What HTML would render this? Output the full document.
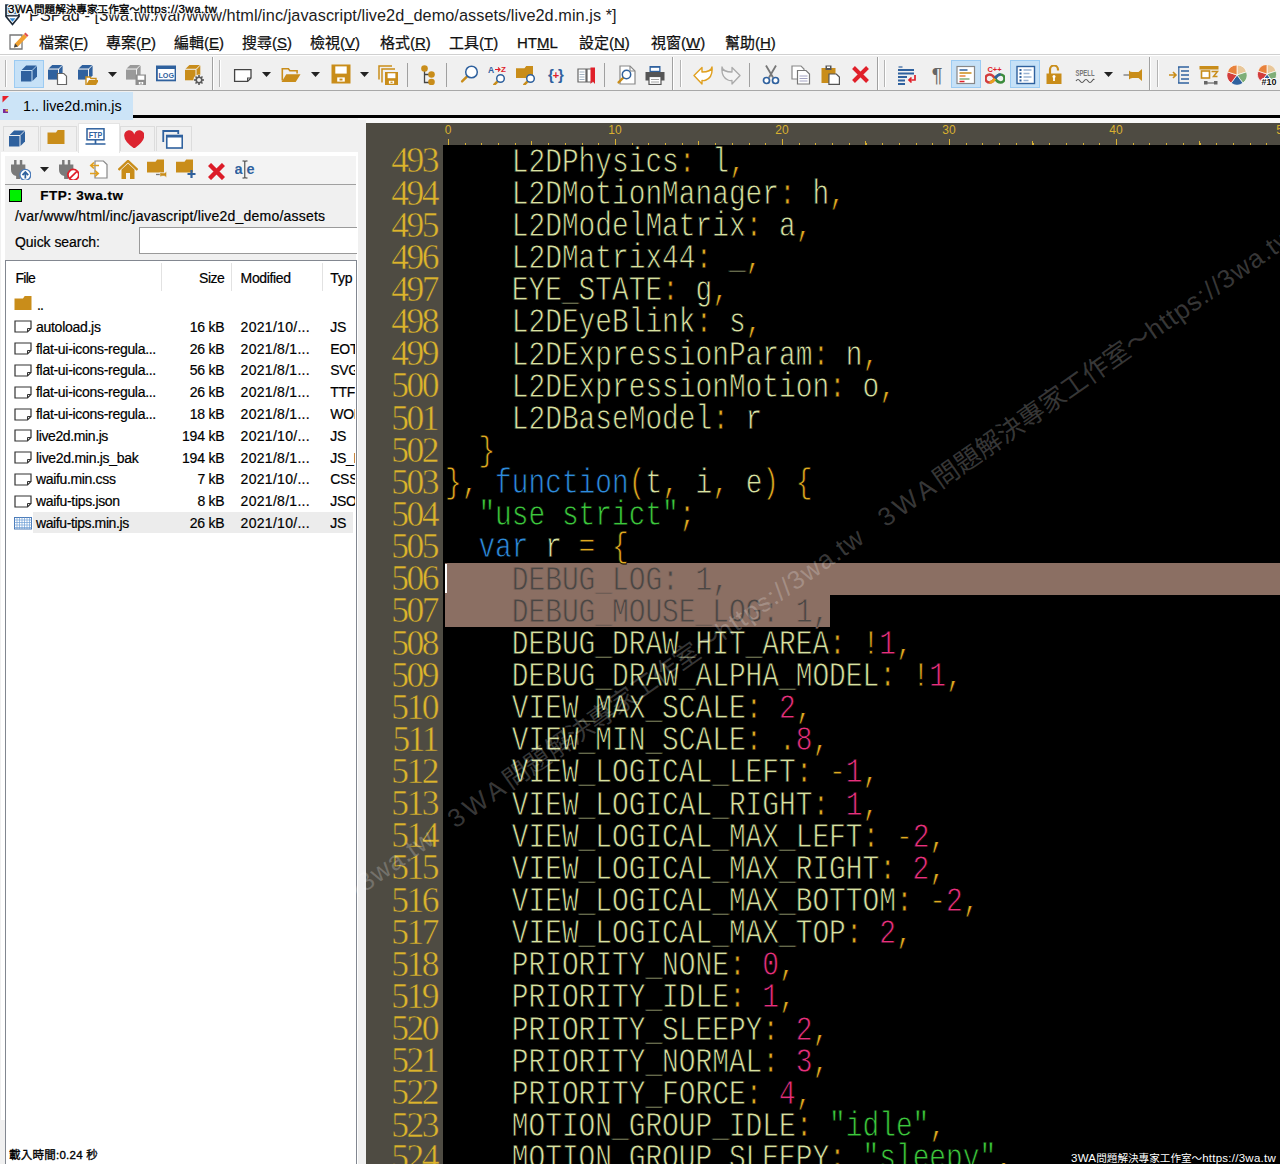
<!DOCTYPE html>
<html><head><meta charset="utf-8"><title>PSPad</title>
<style>
html,body{margin:0;padding:0}
body{width:1280px;height:1164px;position:relative;overflow:hidden;background:#f0f0f0;
 font-family:"Liberation Sans","Noto Sans CJK TC",sans-serif;color:#000;}
.abs{position:absolute}
#title{left:0;top:0;width:1280px;height:30px;background:#fff}
.wmk{font-size:11.500px;line-height:16px;white-space:nowrap;z-index:50;letter-spacing:0.25px}
.wmk .cj{font-size:10.600px;letter-spacing:0}
#wm1{left:8px;top:1px;letter-spacing:0.500px;color:#000;-webkit-text-stroke:0.35px #000;text-shadow:-1px 0 #fff,1px 0 #fff,0 -1px #fff,0 1px #fff,-1px -1px #fff,1px 1px #fff,1px -1px #fff,-1px 1px #fff}
#wm3{left:9px;top:1147px;color:#000;-webkit-text-stroke:0.35px #000;text-shadow:-1px 0 #fff,1px 0 #fff,0 -1px #fff,0 1px #fff,-1px -1px #fff,1px 1px #fff,1px -1px #fff,-1px 1px #fff}
#wm2{left:1071px;top:1149.500px;color:#fff}
#wmd{left:29px;top:1105px;height:30px;width:1600px;transform-origin:0 100%;transform:rotate(-35deg);white-space:nowrap;font-size:26px;line-height:30px;color:rgba(255,255,255,0.22);z-index:40}
#wmd>span{display:inline-block;width:525px}
#wmd s{text-decoration:none}#wmd b{font-weight:normal;letter-spacing:4px}#wmd i{font-style:normal;letter-spacing:1.1px}
#menu{left:0;top:30px;width:1280px;height:24px;background:#fff;border-bottom:1px solid #d0d0d0}
#menu span{-webkit-text-stroke:0.25px #111;position:absolute;top:2px;font-size:15px;line-height:22px;white-space:nowrap;color:#111}
#tb{left:0;top:55px;width:1280px;height:34px;background:#f0f0f0;border-top:1px solid #fff;border-bottom:1px solid #a8a8a8}
#tabs{left:0;top:92px;width:1280px;height:23px;background:#f0f0f0}
#tab1{left:0;top:92px;width:133px;height:28px;background:#cce4f7}
#tab1 .t{left:23px;top:5px;font-size:14.3px;line-height:18px;white-space:nowrap;color:#000}
#bline{left:133px;top:115.400px;width:1147px;height:2.800px;background:#000}
#strip{left:358px;top:118.200px;width:922px;height:5px;background:#f8f8f8}
#left{left:0;top:120px;width:366px;height:1044px;background:#f0f0f0}
.tx{white-space:nowrap;-webkit-text-stroke:0.2px currentColor}
.act{background:#c6e1f7;border:1px solid #9ccbf2}
.sep{top:63px;width:1px;height:24px;background:#a0a0a0}
.bsep{top:57px;width:1px;height:33px;background:#a0a0a0;box-shadow:1px 0 0 #fff}
.grip{top:60px;width:1px;height:27px;background:#b4b4b4;box-shadow:1px 0 0 #fff}
.ptab{background:#f0f0f0;border:1px solid #dcdcdc;border-bottom:none;box-sizing:border-box}
.ptab.on{background:#fff;border-color:#e4e4e4}
#pane{left:1px;top:151.500px;width:357px;height:1013px;background:#f0f0f0;border:solid #fff;border-width:4px 2px 0 4px;box-sizing:border-box}
#list{left:5px;top:260px;width:351.5px;height:910px;background:#fff;border:1px solid #828790;box-sizing:border-box}
#ed{left:366px;top:123px;width:914px;height:1041px;background:#4e4b42;overflow:hidden}
#code{left:77px;top:22px;width:837px;height:1019px;background:#000;overflow:hidden}
.cl,.ln{position:absolute;font-family:"Liberation Mono",monospace;font-size:35px;line-height:32.14px;height:32.14px;white-space:pre;transform-origin:0 0;transform:scaleX(0.7951)}
.cl{left:2.2px;color:#d8e2a0;margin-top:1.8px;-webkit-text-stroke:0.8px #000}
.cl.sl{color:#4a4644;-webkit-text-stroke:0.8px #8b6f63}
.ln{right:3px;transform:none;font-family:"Liberation Serif",serif;font-size:35.5px;letter-spacing:-2.5px;color:#dcb42c;margin-top:-0.6px;-webkit-text-stroke:0.5px #4e4b42}
#gut{left:0;top:22px;width:74px;height:1019px}
.k{color:#2e8bdc}.s{color:#3cc83c}.n{color:#e8307c}.p{color:#e0aa20}
.sel{background:#8b6f63}
.caret{width:2px;height:29px;background:#fff}
#ruler{left:0;top:0;width:914px;height:22px}
.rl{position:absolute;top:0px;width:40px;text-align:center;font-size:12px;line-height:14px;color:#d8b030}
.tk1{left:81.5px;top:20px;width:840px;height:2px;background:repeating-linear-gradient(90deg,#d8b030 0,#d8b030 1px,transparent 1px,transparent 16.7px)}
.tk5{left:81.5px;top:18px;width:840px;height:4px;background:repeating-linear-gradient(90deg,#d8b030 0,#d8b030 1px,transparent 1px,transparent 83.5px)}
.tk10{left:81.5px;top:16px;width:840px;height:6px;background:repeating-linear-gradient(90deg,#d8b030 0,#d8b030 1px,transparent 1px,transparent 167px)}
</style></head>
<body>
<div id="title" class="abs"></div><svg class="abs" style="left:5.0px;top:3.5px" width="15" height="22" viewBox="0 0 15 22"><path d="M1 1h13v11.500l-6.500 8l-6.500 -8z" fill="#fff" stroke="#1c2836" stroke-width="1.700"/><rect x="2.600" y="2.600" width="9.800" height="7.600" fill="#3c78b4"/><path d="M1 11.800h13" stroke="#1c2836" stroke-width="1.400"/><path d="M4.500 14.200h6l-3 3.600z" fill="#2f8ad8"/></svg><span class="abs tx" style="left:29.0px;top:4.5px;font-size:16.3px;line-height:21px;letter-spacing:0.05px;color:#1c1c1c;-webkit-text-stroke:0;">PSPad - [3wa.tw:/var/www/html/inc/javascript/live2d_demo/assets/live2d.min.js *]</span>
<div id="wm1" class="abs wmk">3WA<span class="cj">問題解決專家工作室～</span>https:<span>//</span>3wa.tw</div>
<div id="menu" class="abs"><span style="left:39px">檔案(<u>F</u>)</span><span style="left:106px">專案(<u>P</u>)</span><span style="left:174px">編輯(<u>E</u>)</span><span style="left:242px">搜尋(<u>S</u>)</span><span style="left:310px">檢視(<u>V</u>)</span><span style="left:380px">格式(<u>R</u>)</span><span style="left:449px">工具(<u>T</u>)</span><span style="left:517px">HT<u>M</u>L</span><span style="left:579px">設定(<u>N</u>)</span><span style="left:651px">視窗(<u>W</u>)</span><span style="left:725px">幫助(<u>H</u>)</span></div><svg class="abs" style="left:9.0px;top:32.0px" width="20" height="20" viewBox="0 0 20 20"><path d="M1 3h12v14h-12z" fill="#fff" stroke="#777" stroke-width="1.300"/><path d="M5 15.500l1 -4l9 -9.500l3 3l-9 9.500z" fill="#f0a030"/><path d="M15 2l3 3l1.500 -1.500l-3 -3z" fill="#e05050"/><path d="M5 15.500l1 -4l3 3z" fill="#444"/></svg>
<div id="tb" class="abs"></div><div class="abs grip" style="left:5.0px"></div><div class="abs act" style="left:14.3px;top:60px;width:27.5px;height:26px"></div><svg class="abs" style="left:19.5px;top:63.0px" width="20" height="20" viewBox="0 0 20 20"><path d="M1.0 8.0h10.5v10.5h-10.5z" fill="#2f619e"/><path d="M1.6 7.0l4.5 -4.5h10.5l-4.5 4.5z" fill="#2f619e"/><path d="M12.5 7.6l4.5 -4.5v10.5l-4.5 4.5z" fill="#2f619e"/></svg><svg class="abs" style="left:47.5px;top:64.5px" width="20" height="20" viewBox="0 0 20 20"><path d="M0.0 4.6h10.0v10.0h-10.0z" fill="#2f619e"/><path d="M0.6 3.6l3.6 -3.6h10.0l-3.6 3.6z" fill="#2f619e"/><path d="M11.0 4.2l3.6 -3.6v10.0l-3.6 3.6z" fill="#2f619e"/><path d="M9.5 8.5h6.3l2.7 2.7v8.3h-9.0z" fill="#fff" stroke="#666" stroke-width="1.2"/></svg><svg class="abs" style="left:78.0px;top:64.5px" width="20" height="20" viewBox="0 0 20 20"><path d="M0.0 4.6h10.0v10.0h-10.0z" fill="#2f619e"/><path d="M0.6 3.6l3.6 -3.6h10.0l-3.6 3.6z" fill="#2f619e"/><path d="M11.0 4.2l3.6 -3.6v10.0l-3.6 3.6z" fill="#2f619e"/><path d="M8 20v-8h4l1 1.5h5v2" fill="#fff" stroke="#c98d1a" stroke-width="1.4"/><path d="M8 20l3 -5h10l-3 5z" fill="#c98d1a"/></svg><svg class="abs" style="left:108.0px;top:72px" width="9" height="5" viewBox="0 0 9 5"><path d="M0 0h9l-4.500 5z" fill="#222"/></svg><svg class="abs" style="left:126.0px;top:64.5px" width="20" height="20" viewBox="0 0 20 20"><path d="M0.0 4.6h10.0v10.0h-10.0z" fill="#9a9a9a"/><path d="M0.6 3.6l3.6 -3.6h10.0l-3.6 3.6z" fill="#9a9a9a"/><path d="M11.0 4.2l3.6 -3.6v10.0l-3.6 3.6z" fill="#9a9a9a"/><path d="M9.5 9.5h11.0v11.0h-11.0z" fill="#8e8e8e"/><rect x="11.7" y="10.6" width="6.6" height="4.2" fill="#fff"/><rect x="12.8" y="17.0" width="4.4" height="2.4" fill="#fff"/><rect x="14.1" y="17.6" width="1.8" height="1.1" fill="#8e8e8e"/></svg><svg class="abs" style="left:155.5px;top:63.0px" width="20" height="20" viewBox="0 0 20 20"><rect x="0.9" y="3.4" width="18.6" height="14" fill="#fff" stroke="#2f619e" stroke-width="1.8"/><rect x="0.9" y="3" width="18.6" height="3" fill="#2f619e"/><text x="10.2" y="14.6" font-size="7.2" text-anchor="middle" fill="#2f619e" font-family="Liberation Sans,sans-serif" font-weight="bold">LOG</text></svg><svg class="abs" style="left:184.5px;top:64.5px" width="20" height="20" viewBox="0 0 20 20"><path d="M0.0 4.8h10.5v10.5h-10.5z" fill="#c98d1a"/><path d="M0.6 3.8l3.8 -3.8h10.5l-3.8 3.8z" fill="#c98d1a"/><path d="M11.5 4.4l3.8 -3.8v10.5l-3.8 3.8z" fill="#c98d1a"/><circle cx="14" cy="15" r="5.6" fill="#f0f0f0"/><path d="M16.5 15.0L19.0 15.0" stroke="#5a5a5a" stroke-width="1.6"/><path d="M15.8 16.8L17.5 18.5" stroke="#5a5a5a" stroke-width="1.6"/><path d="M14.0 17.5L14.0 20.0" stroke="#5a5a5a" stroke-width="1.6"/><path d="M12.2 16.8L10.5 18.5" stroke="#5a5a5a" stroke-width="1.6"/><path d="M11.5 15.0L9.0 15.0" stroke="#5a5a5a" stroke-width="1.6"/><path d="M12.2 13.2L10.5 11.5" stroke="#5a5a5a" stroke-width="1.6"/><path d="M14.0 12.5L14.0 10.0" stroke="#5a5a5a" stroke-width="1.6"/><path d="M15.8 13.2L17.5 11.5" stroke="#5a5a5a" stroke-width="1.6"/><circle cx="14.0" cy="15.0" r="2.8" fill="none" stroke="#5a5a5a" stroke-width="1.6"/></svg><div class="abs bsep" style="left:211.5px"></div><div class="abs grip" style="left:219.0px"></div><svg class="abs" style="left:233.0px;top:64.0px" width="20" height="20" viewBox="0 0 20 20"><path d="M1.6 5.6h16.4v8.4l-3.4 3.4h-13z" fill="#fff" stroke="#444" stroke-width="1.3"/><path d="M18 14h-3.4v3.4" fill="none" stroke="#444" stroke-width="1.1"/></svg><svg class="abs" style="left:262.0px;top:72px" width="9" height="5" viewBox="0 0 9 5"><path d="M0 0h9l-4.500 5z" fill="#222"/></svg><svg class="abs" style="left:281.0px;top:64.5px" width="20" height="20" viewBox="0 0 20 20"><path d="M1.3 15.6v-11.9h6.1l1.5 2.0h7.2v2.8" fill="none" stroke="#c98d1a" stroke-width="1.6"/><path d="M0.5 17.0l4.8 -7.7h14.2l-4.8 7.7z" fill="#c98d1a"/></svg><svg class="abs" style="left:311.0px;top:72px" width="9" height="5" viewBox="0 0 9 5"><path d="M0 0h9l-4.500 5z" fill="#222"/></svg><svg class="abs" style="left:331.0px;top:64.0px" width="20" height="20" viewBox="0 0 20 20"><path d="M0.5 0.5h19.0v19.0h-19.0z" fill="#c98d1a"/><rect x="4.3" y="2.4" width="11.4" height="7.2" fill="#fff"/><rect x="6.2" y="13.4" width="7.6" height="4.2" fill="#fff"/><rect x="8.5" y="14.6" width="3.0" height="1.9" fill="#c98d1a"/></svg><svg class="abs" style="left:360.0px;top:72px" width="9" height="5" viewBox="0 0 9 5"><path d="M0 0h9l-4.500 5z" fill="#222"/></svg><svg class="abs" style="left:377.5px;top:64.5px" width="20" height="20" viewBox="0 0 20 20"><path d="M1 14.500v-13.500h13" fill="none" stroke="#c98d1a" stroke-width="1.5"/><path d="M4 17.5v-13.500h13" fill="none" stroke="#c98d1a" stroke-width="1.5"/><path d="M7.0 7.0h13.0v13.0h-13.0z" fill="#c98d1a"/><rect x="9.6" y="8.3" width="7.8" height="4.9" fill="#fff"/><rect x="10.9" y="15.8" width="5.2" height="2.9" fill="#fff"/><rect x="12.5" y="16.6" width="2.1" height="1.3" fill="#c98d1a"/></svg><div class="abs sep" style="left:406.5px"></div><svg class="abs" style="left:420.0px;top:64.5px" width="20" height="20" viewBox="0 0 20 20"><path d="M4.500 4v13.500h5.500M4.500 9.500h5.500" fill="none" stroke="#444" stroke-width="1.3"/><circle cx="4.5" cy="3.5" r="3.3" fill="#c98d1a"/><circle cx="11.5" cy="9.5" r="3.300" fill="#c98d1a"/><circle cx="11.5" cy="17" r="3.300" fill="#c98d1a"/></svg><div class="abs sep" style="left:445.5px"></div><svg class="abs" style="left:459.0px;top:64.5px" width="20" height="20" viewBox="0 0 20 20"><path d="M8.4 11.1l-5.3 5.3" stroke="#c98d1a" stroke-width="2.4" stroke-linecap="round"/><circle cx="12.5" cy="7.0" r="5.8" fill="#fff" stroke="#2f619e" stroke-width="1.5"/></svg><svg class="abs" style="left:487.5px;top:64.5px" width="20" height="20" viewBox="0 0 20 20"><text x="0" y="8" font-size="8.500" fill="#2f619e" font-family="Liberation Sans,sans-serif" font-weight="bold">A</text><text x="13" y="7" font-size="8" fill="#e0202a" font-family="Liberation Sans,sans-serif" font-weight="bold">Z</text><path d="M7 4.500h5m-2 -2l2 2l-2 2" stroke="#e0202a" stroke-width="1.1" fill="none"/><path d="M9.8 16.2l-3.5 3.5" stroke="#c98d1a" stroke-width="2.4" stroke-linecap="round"/><circle cx="12.5" cy="13.5" r="3.8" fill="#fff" stroke="#2f619e" stroke-width="1.5"/></svg><svg class="abs" style="left:516.0px;top:64.5px" width="20" height="20" viewBox="0 0 20 20"><path d="M0.0 3.2h8.5l1.7 -2.2h6.8v12.0h-17.0z" fill="#c98d1a"/><path d="M11.8 16.2l-3.5 3.5" stroke="#c98d1a" stroke-width="2.4" stroke-linecap="round"/><circle cx="14.5" cy="13.5" r="3.8" fill="#fff" stroke="#2f619e" stroke-width="1.5"/></svg><svg class="abs" style="left:546.0px;top:64.5px" width="20" height="20" viewBox="0 0 20 20"><text x="10" y="15" font-size="15" text-anchor="middle" fill="#2f619e" font-family="Liberation Sans,sans-serif" font-weight="bold">{ }</text><text x="10" y="14" font-size="11" text-anchor="middle" fill="#e0202a" font-family="Liberation Sans,sans-serif" font-weight="bold">+</text></svg><svg class="abs" style="left:577.0px;top:64.5px" width="20" height="20" viewBox="0 0 20 20"><path d="M1 4h8v13h-8zM10 4h5v13h-5z" fill="#fff" stroke="#666" stroke-width="1.2"/><path d="M2.500 7h5M2.500 9.500h5M2.500 12h5M2.500 14.500h5" stroke="#9ab" stroke-width="0.9"/><path d="M13.500 2.500h4.500v16.500l-2.250 -2.500l-2.250 2.500z" fill="#e0202a"/></svg><div class="abs sep" style="left:604.0px"></div><svg class="abs" style="left:615.5px;top:64.5px" width="20" height="20" viewBox="0 0 20 20"><path d="M4 1h10l5 5v13h-15z" fill="#fff" stroke="#888" stroke-width="1.2"/><path d="M14 1v5h5" fill="none" stroke="#888" stroke-width="1.100"/><path d="M7.5 12.5l-4.9 4.9" stroke="#c98d1a" stroke-width="2.4" stroke-linecap="round"/><circle cx="10.5" cy="9.5" r="4.2" fill="#fff" stroke="#2f619e" stroke-width="1.5"/></svg><svg class="abs" style="left:645.0px;top:64.5px" width="20" height="20" viewBox="0 0 20 20"><rect x="4.500" y="1" width="11" height="6" fill="#2f619e"/><rect x="5.800" y="2.800" width="8.4" height="3" fill="#fff"/><path d="M0.500 7h19v8.500h-19z" fill="#555"/><rect x="4" y="11.500" width="12" height="8" fill="#fff" stroke="#555" stroke-width="1.200"/><path d="M6 14.500h8M6 17h8" stroke="#999" stroke-width="0.900"/></svg><div class="abs bsep" style="left:672.0px"></div><div class="abs grip" style="left:679.5px"></div><svg class="abs" style="left:692.5px;top:64.5px" width="20" height="20" viewBox="0 0 20 20"><path d="M1 10.500l8 -8v4.500q9 0 10 -5q1 10 -6 13q-2 1 -4 0.500v3.500z" fill="#fff" stroke="#e0a020" stroke-width="1.4" stroke-linejoin="round"/></svg><svg class="abs" style="left:720.5px;top:64.5px" width="20" height="20" viewBox="0 0 20 20"><path d="M19 10.500l-8 -8v4.500q-9 0 -10 -5q-1 10 6 13q2 1 4 0.500v3.500z" fill="#f4f4f4" stroke="#aaa" stroke-width="1.300" stroke-linejoin="round"/></svg><div class="abs sep" style="left:749.0px"></div><svg class="abs" style="left:761.0px;top:64.5px" width="20" height="20" viewBox="0 0 20 20"><path d="M5 0.500l7 12M15 0.500l-7 12" stroke="#777" stroke-width="1.800" fill="none"/><circle cx="5.500" cy="15.500" r="3" fill="#fff" stroke="#2f619e" stroke-width="1.700"/><circle cx="14.500" cy="15.500" r="3" fill="#fff" stroke="#2f619e" stroke-width="1.700"/></svg><svg class="abs" style="left:791.0px;top:64.5px" width="20" height="20" viewBox="0 0 20 20"><path d="M1 1h9l3 3v10h-12z" fill="#fff" stroke="#888" stroke-width="1.200"/><path d="M6.500 5.500h8.500l3.500 3.500v10h-12z" fill="#fff" stroke="#777" stroke-width="1.200"/><path d="M8.500 11h8M8.500 13.500h8M8.500 16h8" stroke="#99b" stroke-width="0.900"/></svg><svg class="abs" style="left:820.5px;top:64.5px" width="20" height="20" viewBox="0 0 20 20"><path d="M0.500 3h14v15h-14z" fill="#c98d1a"/><rect x="4.500" y="0.500" width="6" height="4.500" fill="#555"/><rect x="6" y="1.500" width="3" height="1.500" fill="#fff"/><path d="M8.0 9.0h7.3l3.1 3.1v7.3h-10.5z" fill="#fff" stroke="#555" stroke-width="1.2"/></svg><svg class="abs" style="left:851.0px;top:64.5px" width="20" height="20" viewBox="0 0 20 20"><path d="M2.5 2.5l14.0 14.0M16.5 2.5l-14.0 14.0" stroke="#e0202a" stroke-width="4.0" fill="none"/></svg><div class="abs bsep" style="left:876.5px"></div><div class="abs grip" style="left:884.0px"></div><svg class="abs" style="left:897.0px;top:64.5px" width="20" height="20" viewBox="0 0 20 20"><path d="M1.500 2h4" stroke="#2f619e" stroke-width="1.200"/><path d="M1 5h16M1 8.500h16M1 12h9M1 15.500h7M1 19h7" stroke="#2f619e" stroke-width="1.900"/><path d="M18 10v5h-6m2.500 -2.500l-2.500 2.500l2.500 2.500" stroke="#e0202a" stroke-width="1.700" fill="none"/></svg><svg class="abs" style="left:931.0px;top:64.5px" width="20" height="20" viewBox="0 0 20 20"><text x="6" y="17" font-size="20" text-anchor="middle" fill="#666" font-family="Liberation Sans,sans-serif">¶</text></svg><div class="abs act" style="left:951.0px;top:60px;width:28.0px;height:26px"></div><svg class="abs" style="left:956.0px;top:64.5px" width="20" height="20" viewBox="0 0 20 20"><rect x="1" y="1.500" width="17.500" height="17" fill="#fff" stroke="#888" stroke-width="1.200"/><path d="M3.500 5h8" stroke="#2f619e" stroke-width="1.500"/><path d="M3.500 8h12" stroke="#c98d1a" stroke-width="1.500"/><path d="M3.500 11h6" stroke="#e8823c" stroke-width="1.500"/><path d="M3.500 14h10" stroke="#7fae78" stroke-width="1.500"/><path d="M3.500 16.500h5" stroke="#e0202a" stroke-width="1.500"/></svg><svg class="abs" style="left:985.0px;top:64.5px" width="20" height="20" viewBox="0 0 20 20"><text x="9.500" y="6.500" font-size="7.500" text-anchor="middle" fill="#e0202a" font-family="Liberation Sans,sans-serif" font-weight="bold">C++</text><path d="M10 13.500q-2.500 -4 -5.500 -4a4 4 0 0 0 0 8q3 0 5.500 -4" fill="none" stroke="#d23c3c" stroke-width="2.600"/><path d="M10 13.500q2.500 4 5.500 4a4 4 0 0 0 0 -8q-3 0 -5.500 4" fill="none" stroke="#3c8c3c" stroke-width="2.600"/><path d="M4.500 17.500q3 0 5.500 -4" fill="none" stroke="#e8a020" stroke-width="2.600"/><path d="M15.500 9.500q-3 0 -5.500 4" fill="none" stroke="#2f619e" stroke-width="2.600"/></svg><div class="abs act" style="left:1010.0px;top:60px;width:28.0px;height:26px"></div><svg class="abs" style="left:1016.0px;top:64.5px" width="20" height="20" viewBox="0 0 20 20"><rect x="1" y="1.500" width="17.500" height="17" fill="#fff" stroke="#2f619e" stroke-width="1.400"/><path d="M3.500 5h2M3.500 8.500h2M3.500 12h2M3.500 15.500h2" stroke="#2f619e" stroke-width="1.800"/><path d="M7.500 5h8M7.500 8.500h6M7.500 12h8M7.500 15.500h5" stroke="#9ab4d4" stroke-width="1.300"/></svg><svg class="abs" style="left:1045.0px;top:64.5px" width="20" height="20" viewBox="0 0 20 20"><path d="M5 9v-4.500a4 4 0 0 1 8 0v1" fill="none" stroke="#c98d1a" stroke-width="2.200"/><rect x="1.500" y="8.500" width="15" height="10.500" fill="#c98d1a"/><path d="M9 11v5" stroke="#fff" stroke-width="1.800"/><circle cx="9" cy="11.500" r="1.500" fill="#fff"/></svg><svg class="abs" style="left:1075.0px;top:65.5px" width="20" height="20" viewBox="0 0 20 20"><text x="10" y="9.500" font-size="8.200" text-anchor="middle" fill="#777" font-family="Liberation Sans,sans-serif" font-weight="bold" textLength="19" lengthAdjust="spacingAndGlyphs">SPELL</text><path d="M1 15q2 -3 4 0t4 0t4 0t4 0t2 -1" fill="none" stroke="#555" stroke-width="1.100"/></svg><svg class="abs" style="left:1104.0px;top:72px" width="9" height="5" viewBox="0 0 9 5"><path d="M0 0h9l-4.500 5z" fill="#222"/></svg><svg class="abs" style="left:1123.0px;top:64.5px" width="20" height="20" viewBox="0 0 20 20"><path d="M0.500 10h7" stroke="#888" stroke-width="1.500"/><path d="M6 5.500q1.500 2 4.500 1.500h5l3.500 -3v12l-3.500 -3h-5q-3 -0.500 -4.500 1.500z" fill="#c98d1a"/></svg><div class="abs bsep" style="left:1148.5px"></div><div class="abs grip" style="left:1156.5px"></div><svg class="abs" style="left:1168.5px;top:64.5px" width="20" height="20" viewBox="0 0 20 20"><path d="M0 10h6.500m-2.500 -3l3 3l-3 3" stroke="#c98d1a" stroke-width="1.600" fill="none"/><path d="M9 2h11M12 6h8M12 10h8M12 14h8M9 18h11" stroke="#2f619e" stroke-width="1.600"/><path d="M9.800 2v16" stroke="#2f619e" stroke-width="1.200"/></svg><svg class="abs" style="left:1199.0px;top:64.5px" width="20" height="20" viewBox="0 0 20 20"><path d="M0.500 1h19v3.500h-19z" fill="#c98d1a"/><rect x="2.500" y="6" width="8" height="7" fill="#fff" stroke="#c98d1a" stroke-width="1.600"/><path d="M12.500 6.500h6l-4 5h4" fill="none" stroke="#c98d1a" stroke-width="1.500"/><path d="M7 18h9" stroke="#666" stroke-width="1.200"/><rect x="5" y="16" width="3.500" height="3.500" fill="#666"/><rect x="15" y="16" width="3.500" height="3.500" fill="#666"/></svg><svg class="abs" style="left:1227.0px;top:64.5px" width="20" height="20" viewBox="0 0 20 20"><path d="M10.0 10.0L10.0 0.0A10.0 10.0 0 0 1 19.5 6.9z" fill="#e8c79a" stroke="#fff" stroke-width="0.7"/><path d="M10.0 10.0L19.5 6.9A10.0 10.0 0 0 1 15.9 18.1z" fill="#7fae78" stroke="#fff" stroke-width="0.7"/><path d="M10.0 10.0L15.9 18.1A10.0 10.0 0 0 1 4.1 18.1z" fill="#2f619e" stroke="#fff" stroke-width="0.7"/><path d="M10.0 10.0L4.1 18.1A10.0 10.0 0 0 1 0.5 6.9z" fill="#d23c3c" stroke="#fff" stroke-width="0.7"/><path d="M10.0 10.0L0.5 6.9A10.0 10.0 0 0 1 10.0 0.0z" fill="#e8823c" stroke="#fff" stroke-width="0.7"/></svg><svg class="abs" style="left:1257.0px;top:64.5px" width="20" height="20" viewBox="0 0 20 20"><path d="M10.0 9.0L10.0 -0.5A9.5 9.5 0 0 1 19.0 6.1z" fill="#e8c79a" stroke="#fff" stroke-width="0.7"/><path d="M10.0 9.0L19.0 6.1A9.5 9.5 0 0 1 15.6 16.7z" fill="#7fae78" stroke="#fff" stroke-width="0.7"/><path d="M10.0 9.0L15.6 16.7A9.5 9.5 0 0 1 4.4 16.7z" fill="#2f619e" stroke="#fff" stroke-width="0.7"/><path d="M10.0 9.0L4.4 16.7A9.5 9.5 0 0 1 1.0 6.1z" fill="#d23c3c" stroke="#fff" stroke-width="0.7"/><path d="M10.0 9.0L1.0 6.1A9.5 9.5 0 0 1 10.0 -0.5z" fill="#e8823c" stroke="#fff" stroke-width="0.7"/><text x="12" y="20" font-size="9" text-anchor="middle" fill="#111" stroke="#fff" stroke-width="2" paint-order="stroke" font-family="Liberation Sans,sans-serif" font-weight="bold">#10</text></svg>
<div id="tabs" class="abs"></div><div id="tab1" class="abs"><div class="t abs">1.. live2d.min.js</div><svg class="abs" style="left:2px;top:4px" width="8" height="18" viewBox="0 0 8 18"><path d="M0.500 0h6.500l-6.500 6.500z" fill="#e8202a"/><path d="M1 13h5v4h-5z" fill="#7a2a9a"/><path d="M3.500 13.500h2.500v2h-2.500z" fill="#f0c040"/></svg></div><div id="bline" class="abs"></div><div id="strip" class="abs"></div>
<div id="left" class="abs"></div><div class="abs ptab" style="left:3.0px;top:126px;width:36.0px;height:25px"></div><div class="abs ptab" style="left:40.0px;top:126px;width:36.5px;height:25px"></div><div class="abs ptab" style="left:120.0px;top:126px;width:35.0px;height:25px"></div><div class="abs ptab" style="left:156.0px;top:126px;width:35.5px;height:25px"></div><div id="pane" class="abs"></div><div class="abs ptab on" style="left:77.5px;top:123px;width:42px;height:30px"></div><svg class="abs" style="left:8.0px;top:128.0px" width="20" height="20" viewBox="0 0 20 20"><path d="M1.0 8.0h10.5v10.5h-10.5z" fill="#2f619e"/><path d="M1.6 7.0l4.5 -4.5h10.5l-4.5 4.5z" fill="#2f619e"/><path d="M12.5 7.6l4.5 -4.5v10.5l-4.5 4.5z" fill="#2f619e"/></svg><svg class="abs" style="left:46.5px;top:128.0px" width="20" height="20" viewBox="0 0 20 20"><path d="M0.5 4.5h8.5l1.7 -2.5h6.8v14.0h-17.0z" fill="#c98d1a"/></svg><svg class="abs" style="left:85.0px;top:128.0px" width="21" height="17" viewBox="0 0 20 17"><rect x="1.500" y="0.800" width="17" height="11" fill="#fff" stroke="#2f619e" stroke-width="1.500"/><text x="10" y="9.600" font-size="9" text-anchor="middle" fill="#2f619e" font-family="Liberation Sans,sans-serif" font-weight="bold" textLength="13.500" lengthAdjust="spacingAndGlyphs">FTP</text><path d="M10 12v3.500M0 16h20" stroke="#2f619e" stroke-width="1.700"/></svg><svg class="abs" style="left:123.5px;top:129.5px" width="20.5" height="18.5" viewBox="0 0 20 18.5"><path d="M10 18.500q-10 -7 -10 -12.500a5 5 0 0 1 10 -1.500a5 5 0 0 1 10 1.500q0 5.500 -10 12.500z" fill="#dc2430"/></svg><svg class="abs" style="left:161.5px;top:130.0px" width="21.5" height="19" viewBox="0 0 21 19"><path d="M1 12v-11h15v3" fill="none" stroke="#2f619e" stroke-width="1.800"/><rect x="4.500" y="5.500" width="15.500" height="12.500" fill="#fff" stroke="#2f619e" stroke-width="1.600"/><rect x="4.500" y="5" width="15.500" height="2.500" fill="#2f619e"/></svg><div class="abs" style="left:5px;top:155.500px;width:351px;height:28px;background:#f3f3f3;border-bottom:1.500px solid #a0a0a0"></div><svg class="abs" style="left:10.5px;top:159.5px" width="20.5" height="20.5" viewBox="0 0 20 20"><rect x="3.0" y="0.0" width="2.4" height="5" fill="#7a7a7a"/><rect x="8.6" y="0.0" width="2.4" height="5" fill="#7a7a7a"/><path d="M0.0 4.5h14v5q0 5 -5 6v3h-4v-3q-5 -1 -5 -6z" fill="#7a7a7a"/><circle cx="14" cy="14.500" r="5.300" fill="#fff" stroke="#4a7ab8" stroke-width="1.300"/><path d="M14 18v-6m-2.800 2.800l2.800 -3l2.800 3" stroke="#2f619e" stroke-width="1.700" fill="none"/></svg><svg class="abs" style="left:39.5px;top:167px" width="9" height="5" viewBox="0 0 9 5"><path d="M0 0h9l-4.500 5z" fill="#222"/></svg><svg class="abs" style="left:58.5px;top:159.5px" width="20.5" height="20.5" viewBox="0 0 20 20"><rect x="3.0" y="0.0" width="2.4" height="5" fill="#7a7a7a"/><rect x="8.6" y="0.0" width="2.4" height="5" fill="#7a7a7a"/><path d="M0.0 4.5h14v5q0 5 -5 6v3h-4v-3q-5 -1 -5 -6z" fill="#7a7a7a"/><circle cx="14" cy="14.500" r="5.300" fill="#fff" stroke="#e0202a" stroke-width="1.700"/><path d="M10.500 18l7 -7" stroke="#e0202a" stroke-width="1.700"/></svg><svg class="abs" style="left:88.5px;top:159.5px" width="20" height="20" viewBox="0 0 20 20"><path d="M6.0 1.0h8.4l3.6 3.6v13.4h-12.0z" fill="#fff" stroke="#888" stroke-width="1.2"/><path d="M10 5.500h-8m3 -3l-3.200 3l3.200 3M1 13.500h8m-3 -3l3.200 3l-3.200 3" stroke="#e0a020" stroke-width="1.700" fill="none"/></svg><svg class="abs" style="left:118.0px;top:160.0px" width="20" height="20" viewBox="0 0 20 20"><path d="M0.500 10l9.500 -9l9.500 9" fill="none" stroke="#c98d1a" stroke-width="2.400"/><path d="M3.500 9.500l6.500 -6l6.500 6v9.500h-4.500v-6h-4v6h-4.500z" fill="#c98d1a"/></svg><svg class="abs" style="left:146.5px;top:159.0px" width="20" height="20" viewBox="0 0 20 20"><path d="M0.0 2.8h8.5l1.7 -2.3h6.8v13.0h-17.0z" fill="#c98d1a"/><path d="M9 15.500h5" stroke="#777" stroke-width="1.300"/><path d="M13 13q1 1 2.500 1h2l2 -1.500v6l-2 -1.500h-2q-1.500 0 -2.500 1z" fill="#c98d1a" stroke="#f0f0f0" stroke-width="0.500"/></svg><svg class="abs" style="left:176.0px;top:159.0px" width="20" height="20" viewBox="0 0 20 20"><path d="M0.0 2.8h8.5l1.7 -2.3h6.8v13.0h-17.0z" fill="#c98d1a"/><path d="M15.500 11v8M11.500 15h8" stroke="#2f619e" stroke-width="2.200"/></svg><svg class="abs" style="left:208px;top:163px" width="17" height="17" viewBox="0 0 17 17"><path d="M1.500 1.500l14 14M15.500 1.500l-14 14" stroke="#dc1c28" stroke-width="4.400" fill="none"/></svg><svg class="abs" style="left:235.0px;top:160.0px" width="20" height="20" viewBox="0 0 20 20"><text x="-0.500" y="14" font-size="14.500" fill="#2f619e" font-weight="bold" font-family="Liberation Sans,sans-serif">a</text><text x="11.500" y="14" font-size="14.500" fill="#2f619e" font-weight="bold" font-family="Liberation Sans,sans-serif">e</text><path d="M9.800 1.500v16M7.500 1h2q0.500 0 0.500 0.700q0 -0.700 0.500 -0.700h2M7.500 18h2q0.500 0 0.500 -0.700q0 0.700 0.500 0.700h2" stroke="#333" stroke-width="1" fill="none"/></svg><div class="abs" style="left:9px;top:189px;width:10.5px;height:10.5px;background:#00f000;border:1px solid #000"></div><span class="abs tx" style="left:40.3px;top:186.6px;font-size:13.5px;line-height:18px;letter-spacing:0.46px;color:#000;font-weight:bold;">FTP: 3wa.tw</span><span class="abs tx" style="left:15.0px;top:207.0px;font-size:14.0px;line-height:18px;letter-spacing:0.21px;color:#000;">/var/www/html/inc/javascript/live2d_demo/assets</span><span class="abs tx" style="left:15.0px;top:232.5px;font-size:14.0px;line-height:18px;letter-spacing:-0.05px;color:#000;">Quick search:</span><div class="abs" style="left:139px;top:227.300px;width:217px;height:24.300px;background:#fff;border:solid #9a9a9a;border-width:1.500px 0 1.500px 1px"></div><div id="list" class="abs"></div><div class="abs" style="left:161px;top:263px;width:1px;height:28px;background:#e2e2e2"></div><div class="abs" style="left:231px;top:263px;width:1px;height:28px;background:#e2e2e2"></div><div class="abs" style="left:322px;top:263px;width:1px;height:28px;background:#e2e2e2"></div><span class="abs tx" style="left:15.6px;top:268.5px;font-size:14.0px;line-height:18px;letter-spacing:-0.79px;color:#000;">File</span><span class="abs tx" style="left:199.0px;top:268.5px;font-size:14.0px;line-height:18px;letter-spacing:-0.46px;color:#000;">Size</span><span class="abs tx" style="left:240.6px;top:268.5px;font-size:14.0px;line-height:18px;letter-spacing:-0.36px;color:#000;">Modified</span><span class="abs tx" style="left:330.3px;top:268.5px;font-size:14.0px;line-height:18px;letter-spacing:-0.12px;color:#000;">Typ</span><svg class="abs" style="left:13.5px;top:293.5px" width="18" height="18" viewBox="0 0 18 18"><path d="M0.5 4.5h8.5l1.7 -2.5h6.8v14.0h-17.0z" fill="#c98d1a"/></svg><span class="abs tx" style="left:37.0px;top:296.0px;font-size:14.0px;line-height:18px;letter-spacing:-0.89px;color:#000;">..</span><svg class="abs" style="left:14.0px;top:320.3px" width="18" height="13" viewBox="0 0 18 13"><path d="M1 1h16v7.500l-3.500 3.500h-12.500z" fill="#fff" stroke="#333" stroke-width="1.200"/><path d="M17 8.500h-3.500v3.500" fill="none" stroke="#333" stroke-width="1"/></svg><span class="abs tx" style="left:36.0px;top:317.8px;font-size:14.0px;line-height:18px;letter-spacing:-0.28px;color:#000;">autoload.js</span><span class="abs tx" style="left:189.7px;top:317.8px;font-size:14.0px;line-height:18px;letter-spacing:-0.22px;color:#000;">16 kB</span><span class="abs tx" style="left:240.6px;top:317.8px;font-size:14.0px;line-height:18px;letter-spacing:0.29px;color:#000;">2021/10/...</span><span class="abs tx" style="left:330.3px;top:317.8px;font-size:14px;line-height:18px;letter-spacing:-0.3px;width:25px;overflow:hidden">JS</span><svg class="abs" style="left:14.0px;top:342.1px" width="18" height="13" viewBox="0 0 18 13"><path d="M1 1h16v7.500l-3.500 3.500h-12.500z" fill="#fff" stroke="#333" stroke-width="1.200"/><path d="M17 8.500h-3.500v3.500" fill="none" stroke="#333" stroke-width="1"/></svg><span class="abs tx" style="left:36.0px;top:339.6px;font-size:14.0px;line-height:18px;letter-spacing:-0.30px;color:#000;">flat-ui-icons-regula...</span><span class="abs tx" style="left:189.7px;top:339.6px;font-size:14.0px;line-height:18px;letter-spacing:-0.22px;color:#000;">26 kB</span><span class="abs tx" style="left:240.6px;top:339.6px;font-size:14.0px;line-height:18px;letter-spacing:0.29px;color:#000;">2021/8/1...</span><span class="abs tx" style="left:330.3px;top:339.6px;font-size:14px;line-height:18px;letter-spacing:-0.3px;width:25px;overflow:hidden">EOT</span><svg class="abs" style="left:14.0px;top:363.9px" width="18" height="13" viewBox="0 0 18 13"><path d="M1 1h16v7.500l-3.500 3.500h-12.500z" fill="#fff" stroke="#333" stroke-width="1.200"/><path d="M17 8.500h-3.500v3.500" fill="none" stroke="#333" stroke-width="1"/></svg><span class="abs tx" style="left:36.0px;top:361.4px;font-size:14.0px;line-height:18px;letter-spacing:-0.30px;color:#000;">flat-ui-icons-regula...</span><span class="abs tx" style="left:189.7px;top:361.4px;font-size:14.0px;line-height:18px;letter-spacing:-0.22px;color:#000;">56 kB</span><span class="abs tx" style="left:240.6px;top:361.4px;font-size:14.0px;line-height:18px;letter-spacing:0.29px;color:#000;">2021/8/1...</span><span class="abs tx" style="left:330.3px;top:361.4px;font-size:14px;line-height:18px;letter-spacing:-0.3px;width:25px;overflow:hidden">SVG</span><svg class="abs" style="left:14.0px;top:385.7px" width="18" height="13" viewBox="0 0 18 13"><path d="M1 1h16v7.500l-3.500 3.500h-12.500z" fill="#fff" stroke="#333" stroke-width="1.200"/><path d="M17 8.500h-3.500v3.500" fill="none" stroke="#333" stroke-width="1"/></svg><span class="abs tx" style="left:36.0px;top:383.2px;font-size:14.0px;line-height:18px;letter-spacing:-0.30px;color:#000;">flat-ui-icons-regula...</span><span class="abs tx" style="left:189.7px;top:383.2px;font-size:14.0px;line-height:18px;letter-spacing:-0.22px;color:#000;">26 kB</span><span class="abs tx" style="left:240.6px;top:383.2px;font-size:14.0px;line-height:18px;letter-spacing:0.29px;color:#000;">2021/8/1...</span><span class="abs tx" style="left:330.3px;top:383.2px;font-size:14px;line-height:18px;letter-spacing:-0.3px;width:25px;overflow:hidden">TTF</span><svg class="abs" style="left:14.0px;top:407.5px" width="18" height="13" viewBox="0 0 18 13"><path d="M1 1h16v7.500l-3.500 3.500h-12.500z" fill="#fff" stroke="#333" stroke-width="1.200"/><path d="M17 8.500h-3.500v3.500" fill="none" stroke="#333" stroke-width="1"/></svg><span class="abs tx" style="left:36.0px;top:405.0px;font-size:14.0px;line-height:18px;letter-spacing:-0.30px;color:#000;">flat-ui-icons-regula...</span><span class="abs tx" style="left:189.7px;top:405.0px;font-size:14.0px;line-height:18px;letter-spacing:-0.22px;color:#000;">18 kB</span><span class="abs tx" style="left:240.6px;top:405.0px;font-size:14.0px;line-height:18px;letter-spacing:0.29px;color:#000;">2021/8/1...</span><span class="abs tx" style="left:330.3px;top:405.0px;font-size:14px;line-height:18px;letter-spacing:-0.3px;width:25px;overflow:hidden">WOFF</span><svg class="abs" style="left:14.0px;top:429.3px" width="18" height="13" viewBox="0 0 18 13"><path d="M1 1h16v7.500l-3.500 3.500h-12.500z" fill="#fff" stroke="#333" stroke-width="1.200"/><path d="M17 8.500h-3.500v3.500" fill="none" stroke="#333" stroke-width="1"/></svg><span class="abs tx" style="left:36.0px;top:426.8px;font-size:14.0px;line-height:18px;letter-spacing:-0.39px;color:#000;">live2d.min.js</span><span class="abs tx" style="left:182.0px;top:426.8px;font-size:14.0px;line-height:18px;letter-spacing:-0.20px;color:#000;">194 kB</span><span class="abs tx" style="left:240.6px;top:426.8px;font-size:14.0px;line-height:18px;letter-spacing:0.29px;color:#000;">2021/10/...</span><span class="abs tx" style="left:330.3px;top:426.8px;font-size:14px;line-height:18px;letter-spacing:-0.3px;width:25px;overflow:hidden">JS</span><svg class="abs" style="left:14.0px;top:451.1px" width="18" height="13" viewBox="0 0 18 13"><path d="M1 1h16v7.500l-3.500 3.500h-12.500z" fill="#fff" stroke="#333" stroke-width="1.200"/><path d="M17 8.500h-3.500v3.500" fill="none" stroke="#333" stroke-width="1"/></svg><span class="abs tx" style="left:36.0px;top:448.6px;font-size:14.0px;line-height:18px;letter-spacing:-0.29px;color:#000;">live2d.min.js_bak</span><span class="abs tx" style="left:182.0px;top:448.6px;font-size:14.0px;line-height:18px;letter-spacing:-0.20px;color:#000;">194 kB</span><span class="abs tx" style="left:240.6px;top:448.6px;font-size:14.0px;line-height:18px;letter-spacing:0.29px;color:#000;">2021/8/1...</span><span class="abs tx" style="left:330.3px;top:448.6px;font-size:14px;line-height:18px;letter-spacing:-0.3px;width:25px;overflow:hidden">JS_BAK</span><svg class="abs" style="left:14.0px;top:472.9px" width="18" height="13" viewBox="0 0 18 13"><path d="M1 1h16v7.500l-3.500 3.500h-12.500z" fill="#fff" stroke="#333" stroke-width="1.200"/><path d="M17 8.500h-3.500v3.500" fill="none" stroke="#333" stroke-width="1"/></svg><span class="abs tx" style="left:36.0px;top:470.4px;font-size:14.0px;line-height:18px;letter-spacing:-0.34px;color:#000;">waifu.min.css</span><span class="abs tx" style="left:197.4px;top:470.4px;font-size:14.0px;line-height:18px;letter-spacing:-0.25px;color:#000;">7 kB</span><span class="abs tx" style="left:240.6px;top:470.4px;font-size:14.0px;line-height:18px;letter-spacing:0.29px;color:#000;">2021/10/...</span><span class="abs tx" style="left:330.3px;top:470.4px;font-size:14px;line-height:18px;letter-spacing:-0.3px;width:25px;overflow:hidden">CSS</span><svg class="abs" style="left:14.0px;top:494.7px" width="18" height="13" viewBox="0 0 18 13"><path d="M1 1h16v7.500l-3.500 3.500h-12.500z" fill="#fff" stroke="#333" stroke-width="1.200"/><path d="M17 8.500h-3.500v3.500" fill="none" stroke="#333" stroke-width="1"/></svg><span class="abs tx" style="left:36.0px;top:492.2px;font-size:14.0px;line-height:18px;letter-spacing:-0.33px;color:#000;">waifu-tips.json</span><span class="abs tx" style="left:197.4px;top:492.2px;font-size:14.0px;line-height:18px;letter-spacing:-0.25px;color:#000;">8 kB</span><span class="abs tx" style="left:240.6px;top:492.2px;font-size:14.0px;line-height:18px;letter-spacing:0.29px;color:#000;">2021/8/1...</span><span class="abs tx" style="left:330.3px;top:492.2px;font-size:14px;line-height:18px;letter-spacing:-0.3px;width:25px;overflow:hidden">JSON</span><div class="abs" style="left:33px;top:512.0px;width:320px;height:20.500px;background:#ececec"></div><svg class="abs" style="left:14.0px;top:516.5px" width="18" height="13" viewBox="0 0 18 13"><rect x="0.500" y="0.500" width="17" height="11.500" fill="#fff" stroke="#4a7ab8" stroke-width="1"/><path d="M0.500 3h17M0.500 5.500h17M0.500 8h17M0.500 10.500h17M3 0.500v11.500M5.500 0.500v11.500M8 0.500v11.500M10.500 0.500v11.500M13 0.500v11.500M15.500 0.500v11.500" stroke="#6f9fd6" stroke-width="0.700"/></svg><span class="abs tx" style="left:36.0px;top:514.0px;font-size:14.0px;line-height:18px;letter-spacing:-0.40px;color:#000;">waifu-tips.min.js</span><span class="abs tx" style="left:189.7px;top:514.0px;font-size:14.0px;line-height:18px;letter-spacing:-0.22px;color:#000;">26 kB</span><span class="abs tx" style="left:240.6px;top:514.0px;font-size:14.0px;line-height:18px;letter-spacing:0.29px;color:#000;">2021/10/...</span><span class="abs tx" style="left:330.3px;top:514.0px;font-size:14px;line-height:18px;letter-spacing:-0.3px;width:25px;overflow:hidden">JS</span><div class="abs" style="left:0;top:1120px;width:5px;height:44px;background:#f0f0f0"></div>
<div id="ed" class="abs"><div id="ruler" class="abs"><span class="rl" style="left:62.0px">0</span><span class="rl" style="left:229.0px">10</span><span class="rl" style="left:396.0px">20</span><span class="rl" style="left:563.0px">30</span><span class="rl" style="left:730.0px">40</span><span class="rl" style="left:897.0px">50</span><i class="abs tk1"></i><i class="abs tk5"></i><i class="abs tk10"></i></div><div id="gut" class="abs"><div class="ln" style="top:0.00px">493</div><div class="ln" style="top:32.14px">494</div><div class="ln" style="top:64.28px">495</div><div class="ln" style="top:96.42px">496</div><div class="ln" style="top:128.56px">497</div><div class="ln" style="top:160.70px">498</div><div class="ln" style="top:192.84px">499</div><div class="ln" style="top:224.98px">500</div><div class="ln" style="top:257.12px">501</div><div class="ln" style="top:289.26px">502</div><div class="ln" style="top:321.40px">503</div><div class="ln" style="top:353.54px">504</div><div class="ln" style="top:385.68px">505</div><div class="ln" style="top:417.82px">506</div><div class="ln" style="top:449.96px">507</div><div class="ln" style="top:482.10px">508</div><div class="ln" style="top:514.24px">509</div><div class="ln" style="top:546.38px">510</div><div class="ln" style="top:578.52px">511</div><div class="ln" style="top:610.66px">512</div><div class="ln" style="top:642.80px">513</div><div class="ln" style="top:674.94px">514</div><div class="ln" style="top:707.08px">515</div><div class="ln" style="top:739.22px">516</div><div class="ln" style="top:771.36px">517</div><div class="ln" style="top:803.50px">518</div><div class="ln" style="top:835.64px">519</div><div class="ln" style="top:867.78px">520</div><div class="ln" style="top:899.92px">521</div><div class="ln" style="top:932.06px">522</div><div class="ln" style="top:964.20px">523</div><div class="ln" style="top:996.34px">524</div></div><div id="code" class="abs"><div class="abs sel" style="left:2px;top:417.82px;width:835px;height:32.44px"></div><div class="abs sel" style="left:2px;top:449.96px;width:385px;height:31.64px"></div><div class="abs caret" style="left:2px;top:418.82px"></div><div class="cl" style="top:0.00px">    L2DPhysics<span class="p">:</span> l<span class="p">,</span></div><div class="cl" style="top:32.14px">    L2DMotionManager<span class="p">:</span> h<span class="p">,</span></div><div class="cl" style="top:64.28px">    L2DModelMatrix<span class="p">:</span> a<span class="p">,</span></div><div class="cl" style="top:96.42px">    L2DMatrix44<span class="p">:</span> _<span class="p">,</span></div><div class="cl" style="top:128.56px">    EYE_STATE<span class="p">:</span> g<span class="p">,</span></div><div class="cl" style="top:160.70px">    L2DEyeBlink<span class="p">:</span> s<span class="p">,</span></div><div class="cl" style="top:192.84px">    L2DExpressionParam<span class="p">:</span> n<span class="p">,</span></div><div class="cl" style="top:224.98px">    L2DExpressionMotion<span class="p">:</span> o<span class="p">,</span></div><div class="cl" style="top:257.12px">    L2DBaseModel<span class="p">:</span> r</div><div class="cl" style="top:289.26px">  <span class="p">}</span></div><div class="cl" style="top:321.40px"><span class="p">},</span> <span class="k">function</span><span class="p">(</span>t<span class="p">,</span> i<span class="p">,</span> e<span class="p">)</span> <span class="p">{</span></div><div class="cl" style="top:353.54px">  <span class="s">&quot;use strict&quot;</span><span class="p">;</span></div><div class="cl" style="top:385.68px">  <span class="k">var</span> r <span class="p">=</span> <span class="p">{</span></div><div class="cl sl" style="top:417.82px">    DEBUG_LOG: 1,</div><div class="cl sl" style="top:449.96px">    DEBUG_MOUSE_LOG: 1,</div><div class="cl" style="top:482.10px">    DEBUG_DRAW_HIT_AREA<span class="p">:</span> <span class="p">!</span><span class="n">1</span><span class="p">,</span></div><div class="cl" style="top:514.24px">    DEBUG_DRAW_ALPHA_MODEL<span class="p">:</span> <span class="p">!</span><span class="n">1</span><span class="p">,</span></div><div class="cl" style="top:546.38px">    VIEW_MAX_SCALE<span class="p">:</span> <span class="n">2</span><span class="p">,</span></div><div class="cl" style="top:578.52px">    VIEW_MIN_SCALE<span class="p">:</span> <span class="p">.</span><span class="n">8</span><span class="p">,</span></div><div class="cl" style="top:610.66px">    VIEW_LOGICAL_LEFT<span class="p">:</span> <span class="p">-</span><span class="n">1</span><span class="p">,</span></div><div class="cl" style="top:642.80px">    VIEW_LOGICAL_RIGHT<span class="p">:</span> <span class="n">1</span><span class="p">,</span></div><div class="cl" style="top:674.94px">    VIEW_LOGICAL_MAX_LEFT<span class="p">:</span> <span class="p">-</span><span class="n">2</span><span class="p">,</span></div><div class="cl" style="top:707.08px">    VIEW_LOGICAL_MAX_RIGHT<span class="p">:</span> <span class="n">2</span><span class="p">,</span></div><div class="cl" style="top:739.22px">    VIEW_LOGICAL_MAX_BOTTOM<span class="p">:</span> <span class="p">-</span><span class="n">2</span><span class="p">,</span></div><div class="cl" style="top:771.36px">    VIEW_LOGICAL_MAX_TOP<span class="p">:</span> <span class="n">2</span><span class="p">,</span></div><div class="cl" style="top:803.50px">    PRIORITY_NONE<span class="p">:</span> <span class="n">0</span><span class="p">,</span></div><div class="cl" style="top:835.64px">    PRIORITY_IDLE<span class="p">:</span> <span class="n">1</span><span class="p">,</span></div><div class="cl" style="top:867.78px">    PRIORITY_SLEEPY<span class="p">:</span> <span class="n">2</span><span class="p">,</span></div><div class="cl" style="top:899.92px">    PRIORITY_NORMAL<span class="p">:</span> <span class="n">3</span><span class="p">,</span></div><div class="cl" style="top:932.06px">    PRIORITY_FORCE<span class="p">:</span> <span class="n">4</span><span class="p">,</span></div><div class="cl" style="top:964.20px">    MOTION_GROUP_IDLE<span class="p">:</span> <span class="s">&quot;idle&quot;</span><span class="p">,</span></div><div class="cl" style="top:996.34px">    MOTION_GROUP_SLEEPY<span class="p">:</span> <span class="s">&quot;sleepy&quot;</span><span class="p">,</span></div></div></div>
<div id="wm2" class="abs wmk">3WA<span class="cj">問題解決專家工作室～</span>https:<span>//</span>3wa.tw</div><div id="wm3" class="abs wmk">載入時間:0.24 秒</div>
<div id="wmd" class="abs"><span><b>3WA</b>問題解決專家工作室～<i>https:<s>//</s>3wa.tw</i></span><span><b>3WA</b>問題解決專家工作室～<i>https:<s>//</s>3wa.tw</i></span><span><b>3WA</b>問題解決專家工作室～<i>https:<s>//</s>3wa.tw</i></span></div>
</body></html>
